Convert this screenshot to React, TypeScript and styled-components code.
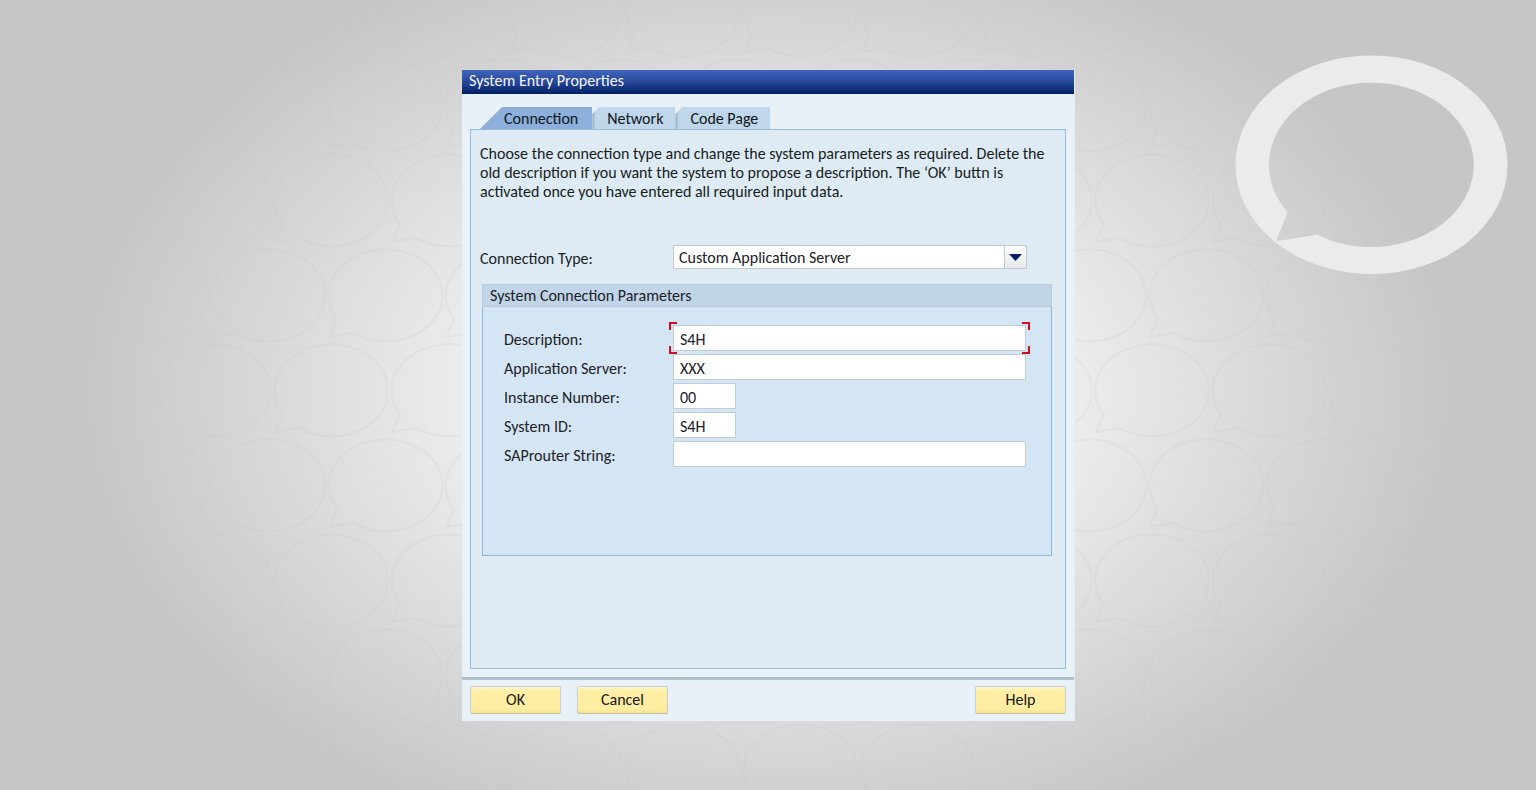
import React, { useState } from "react";
import styled, { createGlobalStyle, css } from "styled-components";

const GlobalStyle = createGlobalStyle`
  *, *::before, *::after { box-sizing: border-box; }
  body { margin: 0; background: #c6c6c6; }
  body, button, input, select {
    font-family: Carlito, Lato, "Liberation Sans", sans-serif;
    font-size: 16px;
    line-height: 19px;
    color: #1c2126;
  }
`;

const Page = styled.div`
  position: relative;
  min-height: 100vh;
  display: flex;
  justify-content: center;
  align-items: flex-start;
  padding: 70px 16px 64px;
  overflow: hidden;
`;

const BackdropSvg = styled.svg`
  position: absolute;
  inset: 0;
  width: 100%;
  height: 100%;
`;

const Dialog = styled.main`
  position: relative;
  width: 100%;
  max-width: 612px;
  background: #e9f1f8;
  box-shadow: 1px 0 0 #e6eef5;
`;

const TitleBar = styled.h1`
  margin: 0;
  height: 24px;
  padding: 1px 7px;
  font-size: 16px;
  font-weight: 400;
  line-height: 19px;
  color: #f2f6fc;
  background: linear-gradient(#4165bd, #27479a 50%, #011f64);
`;

const Body = styled.div`
  padding: 13px 8px 8px;
`;

const TabList = styled.div`
  display: flex;
  padding-left: 10px;
`;

const Tab = styled.button<{ $active: boolean }>`
  height: 22px;
  border: 0;
  color: #10161c;
  cursor: pointer;
  ${({ $active }) =>
    $active
      ? css`
          padding: 2px 14px 1px 24px;
          background: #8cb0db;
          clip-path: polygon(0 100%, 22px 0, 100% 0, 100% 100%);
        `
      : css`
          padding: 2px 12px 1px 15px;
          background: linear-gradient(90deg, #9fb4c8 2px, #bfd6eb 3px);
          clip-path: polygon(0 100%, 0 7px, 7px 0, 100% 0, 100% 100%);
        `}
`;

const Panel = styled.section`
  min-height: 540px;
  padding: 14px 13px 16px 9px;
  background: #deebf4;
  border: 1px solid #94bddc;
`;

const Hint = styled.p`
  margin: 0 0 44px;
  color: #171c20;
`;

const Row = styled.div`
  display: grid;
  grid-template-columns: 193px minmax(0, 354px);
  align-items: center;
`;

const SelectBox = styled.div`
  position: relative;
  height: 24px;
`;

const Select = styled.select`
  appearance: none;
  width: 100%;
  height: 24px;
  padding: 1px 28px 0 5px;
  border: 1px solid #c3cbd2;
  border-radius: 0;
  background: #fff;
`;

const SelectArrow = styled.span`
  position: absolute;
  top: 0;
  right: 0;
  width: 23px;
  height: 24px;
  display: flex;
  align-items: center;
  justify-content: center;
  border: 1px solid #c3cbd2;
  background: linear-gradient(#fdfdfd, #e6e8ea);
  pointer-events: none;
`;

const Group = styled.section`
  min-height: 272px;
  margin: 15px 0 0 2px;
  background: #d4e5f3;
  border: 1px solid #8db9da;
`;

const GroupTitle = styled.h2`
  margin: -1px -1px 0;
  height: 23px;
  padding: 1px 7px;
  font-size: 16px;
  font-weight: 400;
  line-height: 20px;
  background: #c1d5e8;
  border: 1px solid #bccad8;
`;

const Fields = styled.div`
  display: grid;
  gap: 3px;
  padding: 18px 24px 16px 21px;
`;

const FieldRow = styled.div`
  display: grid;
  grid-template-columns: 169px minmax(0, 353px);
  align-items: center;
`;

const Label = styled.label`
  padding-top: 3px;
`;

const InputBox = styled.div<{ $short?: boolean }>`
  position: relative;
  height: 26px;
  width: ${({ $short }) => ($short ? "63px" : "100%")};
`;

const Input = styled.input`
  display: block;
  width: 100%;
  height: 26px;
  padding: 2px 6px 0;
  border: 1px solid #c0cdd8;
  border-radius: 0;
  background: #fff;
`;

const Corner = styled.span<{ $v: "top" | "bottom"; $h: "left" | "right" }>`
  position: absolute;
  width: 8px;
  height: 8px;
  ${({ $v, $h }) => css`
    ${$v}: -3px;
    ${$h}: -4px;
    border-${$v}: 2px solid #cf1020;
    border-${$h}: 2px solid #cf1020;
  `}
`;

const Footer = styled.footer`
  display: flex;
  gap: 16px;
  padding: 6px 8px 7px;
  border-top: 3px solid #afc0ca;
`;

const ActionButton = styled.button<{ $end?: boolean }>`
  width: 91px;
  height: 28px;
  margin-left: ${({ $end }) => ($end ? "auto" : "0")};
  padding: 0 0 1px;
  border: 1px solid #c8cdd0;
  border-bottom-color: #c4bd98;
  border-radius: 2px;
  background: linear-gradient(#fff8d0, #ffeea4 4px, #ffeda2 22px, #f8e394);
  color: #15150f;
  cursor: pointer;
`;

const BUBBLE = "M-47 25 A57 46 0 1 1 -30 39.5 Q-33 38.5 -37 40 L-54 43 Z";

function Backdrop() {
  return (
    <BackdropSvg viewBox="0 0 1536 790" preserveAspectRatio="xMidYMid slice" aria-hidden="true">
      <defs>
        <radialGradient
          id="glow"
          gradientUnits="userSpaceOnUse"
          cx="0"
          cy="0"
          r="1"
          gradientTransform="translate(768 393) scale(687 470)"
        >
          <stop offset="0.2" stopColor="#fdfdfd" />
          <stop offset="1" stopColor="#c6c6c6" />
        </radialGradient>
        <radialGradient
          id="fade"
          gradientUnits="userSpaceOnUse"
          cx="0"
          cy="0"
          r="1"
          gradientTransform="translate(768 393) scale(687 470)"
        >
          <stop offset="0.5" stopColor="#fff" />
          <stop offset="1" stopColor="#000" />
        </radialGradient>
        <pattern
          id="bubbles"
          patternUnits="userSpaceOnUse"
          x="271"
          y="342"
          width="117.25"
          height="190"
        >
          <g fill="none" stroke="#000" strokeOpacity="0.028" strokeWidth="2">
            <path d={BUBBLE} transform="translate(58.5 47)" />
            <path d={BUBBLE} transform="translate(-4.5 142)" />
            <path d={BUBBLE} transform="translate(112.75 142)" />
          </g>
        </pattern>
        <mask id="bubbleFade" maskUnits="userSpaceOnUse" x="0" y="0" width="1536" height="790">
          <rect width="1536" height="790" fill="url(#fade)" />
        </mask>
      </defs>
      <rect width="1536" height="790" fill="url(#glow)" />
      <rect width="1536" height="790" fill="url(#bubbles)" mask="url(#bubbleFade)" />
      <path
        fill="#ebebeb"
        fillRule="evenodd"
        d="M1235.5 164.8 A136 109.4 0 1 1 1507.5 164.8 A136 109.4 0 1 1 1235.5 164.8 Z
           M1287.7 212.3 L1276 241.3 L1317.3 234.7 A102.4 82.2 0 1 0 1287.7 212.3 Z"
      />
    </BackdropSvg>
  );
}

type Field = { id: string; label: string; value: string; short?: boolean; marked?: boolean };

const FIELDS: Field[] = [
  { id: "description", label: "Description:", value: "S4H", marked: true },
  { id: "server", label: "Application Server:", value: "XXX" },
  { id: "instance", label: "Instance Number:", value: "00", short: true },
  { id: "sid", label: "System ID:", value: "S4H", short: true },
  { id: "router", label: "SAProuter String:", value: "" },
];

const TABS = ["Connection", "Network", "Code Page"];

export default function App() {
  const [tab, setTab] = useState(TABS[0]);
  return (
    <>
      <GlobalStyle />
      <Page>
        <Backdrop />
        <Dialog>
          <TitleBar>System Entry Properties</TitleBar>
          <Body>
            <TabList role="tablist">
              {TABS.map((name) => (
                <Tab
                  key={name}
                  type="button"
                  role="tab"
                  aria-selected={tab === name}
                  $active={tab === name}
                  onClick={() => setTab(name)}
                >
                  {name}
                </Tab>
              ))}
            </TabList>
            <Panel>
              <Hint>
                Choose the connection type and change the system parameters as required. Delete the
                <br />
                old description if you want the system to propose a description. The ‘OK’ buttn is
                <br />
                activated once you have entered all required input data.
              </Hint>
              <Row>
                <Label htmlFor="type">Connection Type:</Label>
                <SelectBox>
                  <Select id="type">
                    <option>Custom Application Server</option>
                  </Select>
                  <SelectArrow>
                    <svg width="13" height="7" viewBox="0 0 13 7" aria-hidden="true">
                      <path d="M0 0H13L6.5 7Z" fill="#06206c" />
                    </svg>
                  </SelectArrow>
                </SelectBox>
              </Row>
              <Group>
                <GroupTitle>System Connection Parameters</GroupTitle>
                <Fields>
                  {FIELDS.map((f) => (
                    <FieldRow key={f.id}>
                      <Label htmlFor={f.id}>{f.label}</Label>
                      <InputBox $short={f.short}>
                        <Input id={f.id} type="text" defaultValue={f.value} />
                        {f.marked && (
                          <>
                            <Corner $v="top" $h="left" />
                            <Corner $v="top" $h="right" />
                            <Corner $v="bottom" $h="left" />
                            <Corner $v="bottom" $h="right" />
                          </>
                        )}
                      </InputBox>
                    </FieldRow>
                  ))}
                </Fields>
              </Group>
            </Panel>
          </Body>
          <Footer>
            <ActionButton type="button">OK</ActionButton>
            <ActionButton type="button">Cancel</ActionButton>
            <ActionButton type="button" $end>
              Help
            </ActionButton>
          </Footer>
        </Dialog>
      </Page>
    </>
  );
}
